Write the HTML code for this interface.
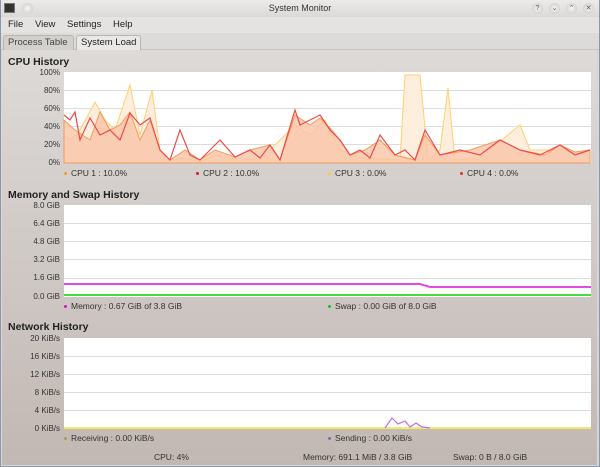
<!DOCTYPE html>
<html><head><meta charset="utf-8"><style>
*{margin:0;padding:0;box-sizing:border-box}
body{width:600px;height:467px;overflow:hidden;font-family:"Liberation Sans","DejaVu Sans",sans-serif;font-size:9px;color:#222;background:#d8d6d4;position:relative}
.abs{position:absolute}
.title{left:0;top:0;width:600px;height:17px;background:linear-gradient(#ecebea,#dcdad8);text-align:center;font-size:9px;line-height:17px;color:#333}
.win{left:0;top:0;width:600px;height:467px;border:1px solid #8a98ad;border-top:none}
.menu{left:0;top:17px;width:600px;height:16px;background:#e4e3e1}
.menu span{position:absolute;top:2px;font-size:9.5px}
.tabs{top:33px;left:0;width:600px;height:17px;background:#dddbd9;border-bottom:1px solid #c8c6c3}
.tab{position:absolute;top:2px;height:15px;font-size:9.5px;line-height:14px;padding:0 4px;white-space:nowrap;border:1px solid #b9b6b2;border-bottom:none;border-radius:3px 3px 0 0}
.page{left:2px;top:50px;width:595px;height:415px;background:linear-gradient(#dddad8,#c2b8b3)}
.h{position:absolute;left:8px;font-weight:bold;font-size:10.5px;color:#222}
.ax{position:absolute;width:56px;text-align:right;font-size:8px;color:#333;left:4px}
.leg{position:absolute;font-size:8.5px;color:#333;white-space:nowrap}
.dot{display:inline-block;width:3px;height:3px;border-radius:50%;margin-right:4px;vertical-align:middle}
.btn{position:absolute;top:3px;width:11px;height:11px;border-radius:50%;background:radial-gradient(#f4f4f3,#c8c6c4);font-size:7px;line-height:11px;text-align:center;color:#555}
</style></head><body>
<div class="abs title">System Monitor</div>
<div class="abs" style="left:4px;top:3px;width:11px;height:10px;background:#333;border:1px solid #777"></div>
<div class="abs" style="left:22px;top:3px;width:11px;height:11px;border-radius:50%;background:radial-gradient(#f6f6f6,#c8c6c4)"></div>
<div class="btn" style="left:532px">?</div><div class="btn" style="left:549px">⌄</div><div class="btn" style="left:566px">⌃</div><div class="btn" style="left:583px">✕</div>
<div class="abs menu"><span style="left:8px">File</span><span style="left:35px">View</span><span style="left:67px">Settings</span><span style="left:113px">Help</span></div>
<div class="abs tabs">
<div class="tab" style="left:3px;width:71px;background:#d3d1ce;color:#444">Process Table</div>
<div class="tab" style="left:76px;width:65px;background:#e9e8e6;height:16px">System Load</div>
</div>
<div class="abs page"></div>
<div class="h" style="top:56px">CPU History</div>
<div class="h" style="top:189px">Memory and Swap History</div>
<div class="h" style="top:321px">Network History</div>
<div class="ax" style="top:68px">100%</div><div class="ax" style="top:86px">80%</div><div class="ax" style="top:104px">60%</div><div class="ax" style="top:122px">40%</div><div class="ax" style="top:140px">20%</div><div class="ax" style="top:158px">0%</div>
<div class="ax" style="top:201px">8.0 GiB</div><div class="ax" style="top:219px">6.4 GiB</div><div class="ax" style="top:237px">4.8 GiB</div><div class="ax" style="top:255px">3.2 GiB</div><div class="ax" style="top:273px">1.6 GiB</div><div class="ax" style="top:292px">0.0 GiB</div>
<div class="ax" style="top:334px">20 KiB/s</div><div class="ax" style="top:352px">16 KiB/s</div><div class="ax" style="top:370px">12 KiB/s</div><div class="ax" style="top:388px">8 KiB/s</div><div class="ax" style="top:406px">4 KiB/s</div><div class="ax" style="top:424px">0 KiB/s</div>
<svg class="abs" style="left:0;top:0" width="600" height="467">
<g fill="#fff"><rect x="64" y="72" width="527" height="91"/><rect x="64" y="205" width="527" height="92"/><rect x="64" y="338" width="527" height="91"/></g>
<g stroke="#dcdcdc" stroke-width="1">
<path d="M64 90.5H591M64 108.5H591M64 126.5H591M64 144.5H591"/>
<path d="M64 223.5H591M64 241.5H591M64 259.5H591M64 278.5H591"/>
<path d="M64 356.5H591M64 374.5H591M64 392.5H591M64 410.5H591"/>
</g>
<path d="M64 163L64 135 70 140 80 130 95 102 105 120 115 130 130 85 140 135 152 90 160 150 170 160 185 158 200 162 215 155 230 158 260 160 295 125 310 135 325 120 340 150 360 158 400 160 405 75 420 75 428 160 440 150 448 88 455 160 480 158 520 125 530 150 560 150 590 155 590 163Z" fill="#fdeede" stroke="#ffd070" stroke-width="1"/>
<path d="M64 163L64 120 75 130 90 140 100 112 110 130 120 125 130 112 140 140 150 120 160 150 170 160 185 150 200 160 215 150 235 157 250 150 270 145 280 160 295 115 310 125 320 118 330 128 340 140 350 155 365 150 380 140 395 155 415 160 425 135 440 155 470 150 500 140 520 150 545 155 560 145 575 152 590 150 590 163Z" fill="#f9c4a8" fill-opacity="0.8" stroke="#f39a5a" stroke-width="1"/>
<path d="M64 115L70 120 75 112 80 140 90 118 100 135 110 130 120 140 130 113 140 125 150 118 160 150 170 160 180 130 190 155 200 160 210 150 220 140 235 157 250 150 260 158 270 145 280 160 295 110 300 125 310 120 320 115 330 130 340 140 350 155 360 150 370 158 380 135 395 155 405 150 415 160 425 130 440 155 460 150 480 155 500 140 520 150 540 155 560 145 575 155 590 150" fill="none" stroke="#ee4a4a" stroke-width="1.2"/>
<path d="M64 284L420 284 430 287 591 287" stroke="#e24ae2" stroke-width="2" fill="none"/>
<path d="M64 295H591" stroke="#44dd44" stroke-width="2"/>
<path d="M64 428H591" stroke="#f0e040" stroke-width="1.5"/>
<path d="M385 428L392 418 398 424 405 421 410 427 416 423 422 427 430 428" stroke="#c070e0" stroke-width="1.2" fill="none"/>
</svg>
<div class="leg" style="left:64px;top:168px"><span class="dot" style="background:#f39a3a"></span>CPU 1 : 10.0%</div>
<div class="leg" style="left:196px;top:168px"><span class="dot" style="background:#d02020"></span>CPU 2 : 10.0%</div>
<div class="leg" style="left:328px;top:168px"><span class="dot" style="background:#f0d040"></span>CPU 3 : 0.0%</div>
<div class="leg" style="left:460px;top:168px"><span class="dot" style="background:#e03030"></span>CPU 4 : 0.0%</div>
<div class="leg" style="left:64px;top:301px"><span class="dot" style="background:#c020c0"></span>Memory : 0.67 GiB of 3.8 GiB</div>
<div class="leg" style="left:328px;top:301px"><span class="dot" style="background:#20c020"></span>Swap : 0.00 GiB of 8.0 GiB</div>
<div class="leg" style="left:64px;top:433px"><span class="dot" style="background:#b0a040"></span>Receiving : 0.00 KiB/s</div>
<div class="leg" style="left:328px;top:433px"><span class="dot" style="background:#9060c0"></span>Sending : 0.00 KiB/s</div>
<div class="leg" style="left:154px;top:452px">CPU: 4%</div>
<div class="leg" style="left:303px;top:452px">Memory: 691.1 MiB / 3.8 GiB</div>
<div class="leg" style="left:453px;top:452px">Swap: 0 B / 8.0 GiB</div>
<div class="abs win"></div>
</body></html>
